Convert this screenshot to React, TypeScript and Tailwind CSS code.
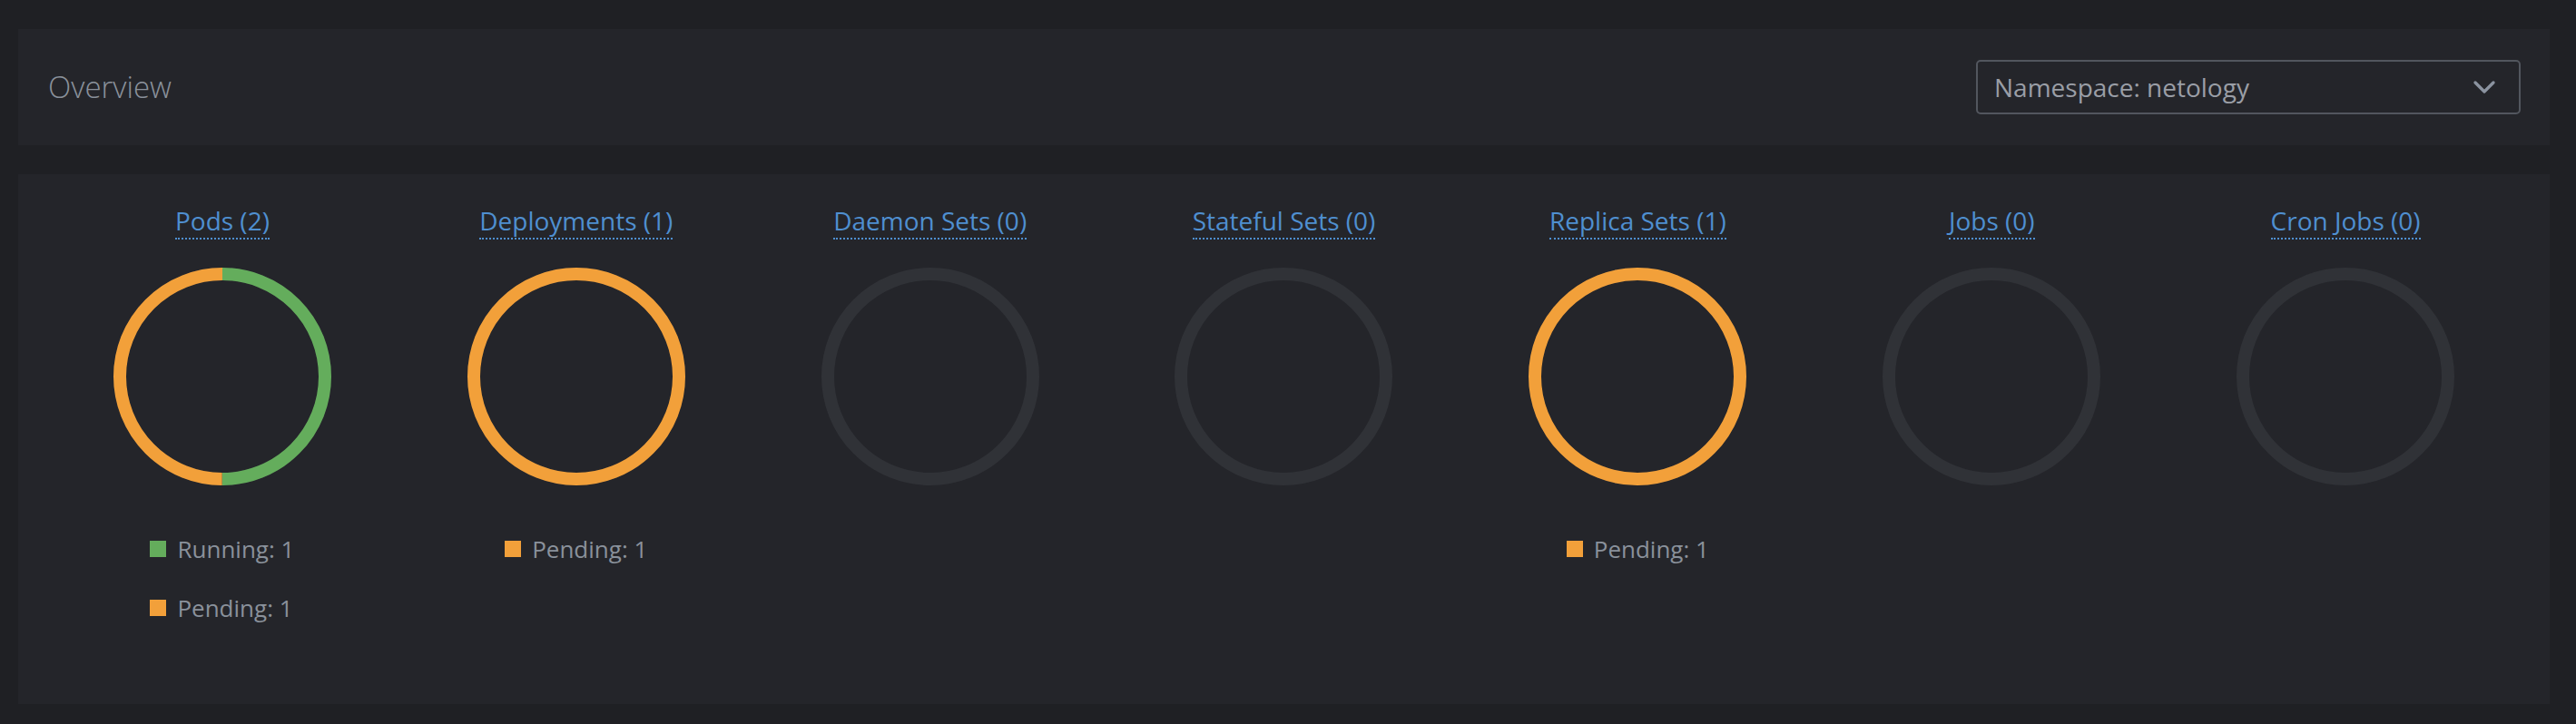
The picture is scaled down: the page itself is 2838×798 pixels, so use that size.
import { ChevronDown } from "lucide-react";

type Slice = { color: string; value: number };

type Workload = {
  title: string;
  slices: Slice[];
  legend: { label: string; color: string }[];
};

const GREEN = "#64ad5c";
const ORANGE = "#f2a03a";

const workloads: Workload[] = [
  {
    title: "Pods (2)",
    slices: [
      { color: GREEN, value: 1 },
      { color: ORANGE, value: 1 },
    ],
    legend: [
      { label: "Running: 1", color: GREEN },
      { label: "Pending: 1", color: ORANGE },
    ],
  },
  {
    title: "Deployments (1)",
    slices: [{ color: ORANGE, value: 1 }],
    legend: [{ label: "Pending: 1", color: ORANGE }],
  },
  { title: "Daemon Sets (0)", slices: [], legend: [] },
  { title: "Stateful Sets (0)", slices: [], legend: [] },
  {
    title: "Replica Sets (1)",
    slices: [{ color: ORANGE, value: 1 }],
    legend: [{ label: "Pending: 1", color: ORANGE }],
  },
  { title: "Jobs (0)", slices: [], legend: [] },
  { title: "Cron Jobs (0)", slices: [], legend: [] },
];

function Ring({ slices }: { slices: Slice[] }) {
  const r = 113;
  const c = 2 * Math.PI * r;
  const total = slices.reduce((s, x) => s + x.value, 0);
  let offset = 0;
  return (
    <svg width="240" height="240" viewBox="0 0 240 240" className="-rotate-90">
      <circle cx="120" cy="120" r={r} fill="none" stroke="#303237" strokeWidth="14" />
      {slices.map((s, i) => {
        const len = (s.value / total) * c;
        const el = (
          <circle
            key={i}
            cx="120"
            cy="120"
            r={r}
            fill="none"
            stroke={s.color}
            strokeWidth="14"
            strokeDasharray={`${len} ${c - len}`}
            strokeDashoffset={-offset}
          />
        );
        offset += len;
        return el;
      })}
    </svg>
  );
}

function WorkloadChart({ item }: { item: Workload }) {
  return (
    <div className="flex flex-col items-center">
      <a className="text-[28px] leading-[38px] text-[#4f8fd0] border-b-2 border-dotted border-[#4f8fd0] cursor-pointer">
        {item.title}
      </a>
      <div className="mt-[31px]">
        <Ring slices={item.slices} />
      </div>
      <div className="mt-[54px] flex flex-col gap-[33px]">
        {item.legend.map((l) => (
          <div key={l.label} className="flex items-center gap-[12px] text-[26px] leading-[32px] text-[#8a919b]">
            <span className="w-[18px] h-[18px]" style={{ backgroundColor: l.color }} />
            <span>{l.label}</span>
          </div>
        ))}
      </div>
    </div>
  );
}

export default function App() {
  return (
    <div
      className="min-h-[798px] bg-[#1f2024] pt-[32px] pl-[20px] pr-[29px] pb-[22px]"
      style={{ fontFamily: '"Open Sans", "Noto Sans", sans-serif' }}
    >
      {/* Header */}
      <div className="h-[128px] bg-[#24252a] flex items-center justify-between pl-[33px] pr-[32px]">
        <h1 className="text-[33px] font-light text-[#8a919b]">Overview</h1>
        <div className="w-[600px] h-[60px] border-2 border-[#52565e] rounded-[5px] flex items-center justify-between pl-[18px] pr-[18px]">
          <span className="text-[28px] text-[#9a9ea6]">Namespace: netology</span>
          <ChevronDown className="w-[40px] h-[40px] text-[#8b93a0]" strokeWidth={2} />
        </div>
      </div>

      {/* Workloads */}
      <div className="mt-[32px] bg-[#24252a] grid grid-cols-7 px-[30px] pt-[32px] h-[584px]">
        {workloads.map((w) => (
          <WorkloadChart key={w.title} item={w} />
        ))}
      </div>
    </div>
  );
}
